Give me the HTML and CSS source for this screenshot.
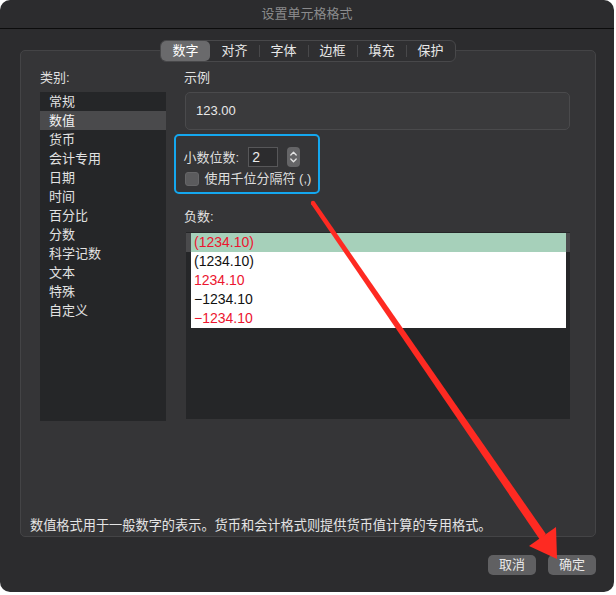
FILE: index.html
```html
<!DOCTYPE html>
<html lang="zh">
<head>
<meta charset="utf-8">
<title>设置单元格格式</title>
<link rel="stylesheet" href="styles.css">
</head>
<body>
<div class="window">
  <div class="titlebar">设置单元格格式</div>
  <div class="body">
    <div class="tabs">
      <div class="tab selected">数字</div>
      <div class="tab">对齐</div>
      <div class="tab">字体</div>
      <div class="tab">边框</div>
      <div class="tab">填充</div>
      <div class="tab">保护</div>
    </div>
    <div class="group">
      <div class="cols">
        <div class="left">
          <div class="label">类别:</div>
          <ul class="catlist">
            <li>常规</li>
            <li class="sel">数值</li>
            <li>货币</li>
            <li>会计专用</li>
            <li>日期</li>
            <li>时间</li>
            <li>百分比</li>
            <li>分数</li>
            <li>科学记数</li>
            <li>文本</li>
            <li>特殊</li>
            <li>自定义</li>
          </ul>
        </div>
        <div class="right">
          <div class="label">示例</div>
          <div class="sample">123.00</div>
          <div class="highlight">
            <div class="decrow">
              <span>小数位数:</span>
              <span class="numbox">2</span>
              <svg class="stepper" width="13" height="20" viewBox="0 0 13 20">
                <rect x="0" y="0" width="13" height="20" rx="4" fill="#656567"/>
                <path d="M3.8 8 L6.5 5.2 L9.2 8" fill="none" stroke="#e4e4e4" stroke-width="1.3" stroke-linecap="round" stroke-linejoin="round"/>
                <path d="M3.8 12 L6.5 14.8 L9.2 12" fill="none" stroke="#e4e4e4" stroke-width="1.3" stroke-linecap="round" stroke-linejoin="round"/>
              </svg>
            </div>
            <div class="checkrow">
              <span class="checkbox"></span>
              <span>使用千位分隔符 (,)</span>
            </div>
          </div>
          <div class="label neglabel">负数:</div>
          <div class="neglist">
            <div class="negrow sel"><span class="cell red">(1234.10)</span></div>
            <div class="negrow"><span class="cell">(1234.10)</span></div>
            <div class="negrow"><span class="cell red">1234.10</span></div>
            <div class="negrow"><span class="cell">−1234.10</span></div>
            <div class="negrow"><span class="cell red">−1234.10</span></div>
          </div>
        </div>
      </div>
      <div class="desc">数值格式用于一般数字的表示。货币和会计格式则提供货币值计算的专用格式。</div>
    </div>
    <div class="buttons">
      <div class="btn">取消</div>
      <div class="btn">确定</div>
    </div>
  </div>
  <svg class="arrow" width="614" height="592" viewBox="0 0 614 592">
    <circle cx="313" cy="203" r="2.2" fill="#fe2a22"/>
    <polygon points="314.8,201.8 311.2,204.2 540.1,540 545.9,534" fill="#fe2a22"/>
    <polygon points="529,546 556,527 557,559" fill="#fe2a22"/>
  </svg>
</div>
</body>
</html>
```

FILE: styles.css
```css
html, body {
  margin: 0;
  padding: 0;
  background: #ffffff;
}

body {
  font-family: "Liberation Sans", "Noto Sans CJK SC", sans-serif;
  font-size: 13px;
  color: #dedede;
}

.window {
  position: relative;
  width: 614px;
  height: 592px;
  background: #2c2c2e;
  border-radius: 10px;
  display: flex;
  flex-direction: column;
}

.titlebar {
  height: 28px;
  line-height: 28px;
  text-align: center;
  color: #8a8a8c;
  font-size: 13px;
  border-bottom: 1px solid #0c0c0c;
}

.body {
  padding: 11px 18px 0 20px;
  display: flex;
  flex-direction: column;
}

.tabs {
  align-self: center;
  display: flex;
  height: 22px;
  box-sizing: border-box;
  border: 1px solid #48484a;
  border-radius: 6px;
  background: #2f2f31;
  position: relative;
  z-index: 1;
}

.tab {
  position: relative;
  width: 49px;
  line-height: 20px;
  text-align: center;
  color: #e8e8e8;
  font-size: 13px;
}

.tab.selected {
  background: #6a6a6c;
  border-radius: 5px;
  color: #ffffff;
}

.tab:nth-child(n+3)::before {
  content: "";
  position: absolute;
  left: 0;
  top: 4px;
  width: 1px;
  height: 12px;
  background: #48484a;
}

.group {
  margin-top: -12px;
  height: 487px;
  box-sizing: border-box;
  border: 1px solid #444446;
  border-radius: 5px;
  background: #353537;
  padding: 18px 25px 1px 19px;
  display: flex;
  flex-direction: column;
}

.cols {
  display: flex;
  gap: 18px;
}

.left {
  width: 126px;
}

.right {
  flex: 1;
  display: flex;
  flex-direction: column;
}

.label {
  height: 18px;
  line-height: 18px;
  margin-bottom: 5px;
  color: #e0e0e0;
}

.catlist {
  list-style: none;
  margin: 0;
  padding: 0;
  height: 329px;
  background: #252628;
}

.catlist li {
  height: 19px;
  line-height: 19px;
  padding-left: 9px;
  color: #e2e2e2;
}

.catlist li.sel {
  background: #4a4a4c;
  color: #f2f2f2;
}

.sample {
  margin-left: 1px;
  height: 38px;
  box-sizing: border-box;
  background: #3a3a3c;
  border: 1px solid #4a4a4c;
  border-radius: 5px;
  padding-left: 10px;
  line-height: 36px;
  color: #e8e8e8;
}

.highlight {
  margin-top: 4px;
  margin-left: -10px;
  width: 146px;
  box-sizing: border-box;
  border: 2.5px solid #14a7ef;
  border-radius: 5px;
  padding: 10.5px 0 5.5px 7.5px;
}

.decrow {
  display: flex;
  align-items: center;
  height: 20px;
}

.numbox {
  margin-left: 9px;
  width: 30px;
  height: 20px;
  box-sizing: border-box;
  background: #2c2c2e;
  border: 1px solid #575759;
  padding-left: 3px;
  line-height: 18px;
  font-size: 14px;
  color: #ececec;
}

.stepper {
  display: block;
  margin-left: 9px;
}

.checkrow {
  margin-top: 4px;
  height: 16px;
  display: flex;
  align-items: center;
  gap: 6px;
  line-height: 16px;
}

.checkbox {
  margin-left: 1px;
  width: 14px;
  height: 14px;
  box-sizing: border-box;
  background: #5b5b5d;
  border: 1px solid #666668;
  border-radius: 3px;
}

.neglabel {
  margin-top: 14px;
  margin-bottom: 6px;
}

.neglist {
  margin-left: 2px;
  height: 187px;
  box-sizing: border-box;
  padding-top: 1px;
  background: #252628;
}

.negrow {
  height: 19px;
  display: flex;
}

.negrow .cell {
  flex: 1;
  margin: 0 4px 0 5px;
  background: #ffffff;
  padding-left: 3px;
  line-height: 19px;
  font-size: 14px;
  color: #111111;
}

.negrow.sel {
  background: #4a4a4c;
}

.negrow.sel .cell {
  background: #a6d0ba;
}

.negrow .cell.red {
  color: #ec1530;
}

.desc {
  margin-top: auto;
  margin-left: -10px;
  line-height: 18px;
  font-size: 13.2px;
  color: #e4e4e4;
}

.buttons {
  margin-top: 18px;
  display: flex;
  justify-content: flex-end;
  gap: 12px;
}

.btn {
  width: 48px;
  height: 20px;
  line-height: 20px;
  text-align: center;
  background: #606062;
  border-radius: 5px;
  color: #e8e8e8;
}

.arrow {
  position: absolute;
  left: 0;
  top: 0;
  pointer-events: none;
}
```
